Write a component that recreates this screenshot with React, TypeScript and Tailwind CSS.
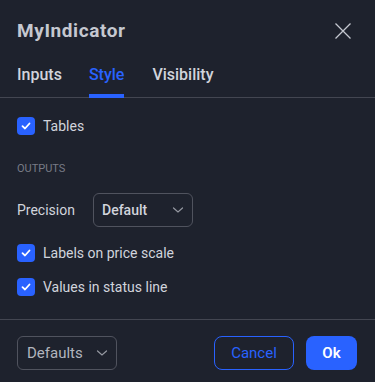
import React from "react";

const font = { fontFamily: "Roboto, 'Liberation Sans', sans-serif" };

function Check() {
  return (
    <span className="flex h-[18px] w-[18px] shrink-0 items-center justify-center rounded-[4px] bg-[#2962ff]">
      <svg width="12" height="12" viewBox="0 0 12 12" fill="none">
        <path d="M2.5 6.2 L5 8.5 L9.5 3.5" stroke="#ffffff" strokeWidth="1.8" strokeLinecap="round" strokeLinejoin="round" />
      </svg>
    </span>
  );
}

function Chevron() {
  return (
    <svg width="12" height="8" viewBox="0 0 12 8" fill="none">
      <path d="M1.5 2 L6 6 L10.5 2" stroke="#9598a1" strokeWidth="1.2" strokeLinecap="round" />
    </svg>
  );
}

function CheckRow({ label }: { label: string }) {
  return (
    <div className="flex h-[18px] items-center gap-2">
      <Check />
      <span className="text-[14px] leading-[18px] text-[#d1d4dc]">{label}</span>
    </div>
  );
}

export default function App() {
  return (
    <div className="h-[382px] w-[375px] overflow-hidden bg-[#1e222d]" style={font}>
      <div className="flex h-[56px] items-center justify-between px-[17px] pt-[6px]">
        <span className="text-[19px] font-bold leading-6 tracking-[0.6px] text-[#c5c8d0]">MyIndicator</span>
        <svg width="16" height="16" viewBox="0 0 16 16" fill="none" className="mr-[7px]">
          <path d="M0.5 0.5 L15.5 15.5 M15.5 0.5 L0.5 15.5" stroke="#c5c8d0" strokeWidth="1.3" />
        </svg>
      </div>
      <div className="flex h-[42px] items-stretch gap-7 border-b border-[#434651] px-[17px]">
        <div className="flex items-center pb-[3px] text-[16px] font-medium text-[#d1d4dc]">Inputs</div>
        <div className="relative -ml-px flex items-center pb-[3px] text-[16px] font-medium text-[#2962ff]">
          Style
          <span className="absolute -bottom-px left-0 h-[4px] w-[35px] bg-[#2962ff]" />
        </div>
        <div className="flex items-center pb-[3px] text-[16px] font-medium text-[#d1d4dc]">Visibility</div>
      </div>
      <div className="flex flex-col px-[17px] pt-[19px]">
        <CheckRow label="Tables" />
        <div className="mt-[26px] text-[11px] leading-4 text-[#787b86]">OUTPUTS</div>
        <div className="mt-[16px] flex h-[34px] items-center">
          <span className="w-[76px] text-[14px] text-[#d1d4dc]">Precision</span>
          <div className="flex h-[34px] w-[100px] items-center justify-between rounded-[6px] border border-[#50535e] pl-[8px] pr-[8px]">
            <span className="text-[14px] font-medium text-[#d1d4dc]">Default</span>
            <Chevron />
          </div>
        </div>
        <div className="mt-[17px]">
          <CheckRow label="Labels on price scale" />
        </div>
        <div className="mt-[16px]">
          <CheckRow label="Values in status line" />
        </div>
      </div>
      <div className="mt-[23px] flex items-center justify-between border-t border-[#434651] pl-[17px] pr-[18px] pt-[16px]">
        <div className="flex h-[34px] w-[100px] items-center justify-between rounded-[6px] border border-[#50535e] pl-[9px] pr-[8px]">
          <span className="text-[15px] text-[#b2b5be]">Defaults</span>
          <Chevron />
        </div>
        <div className="flex gap-3">
          <div className="flex h-[34px] w-[80px] items-center justify-center rounded-[8px] border border-[#2962ff] text-[15px] text-[#2962ff]">Cancel</div>
          <div className="flex h-[34px] w-[51px] items-center justify-center rounded-[8px] bg-[#2962ff] text-[15px] font-semibold text-white">Ok</div>
        </div>
      </div>
    </div>
  );
}
